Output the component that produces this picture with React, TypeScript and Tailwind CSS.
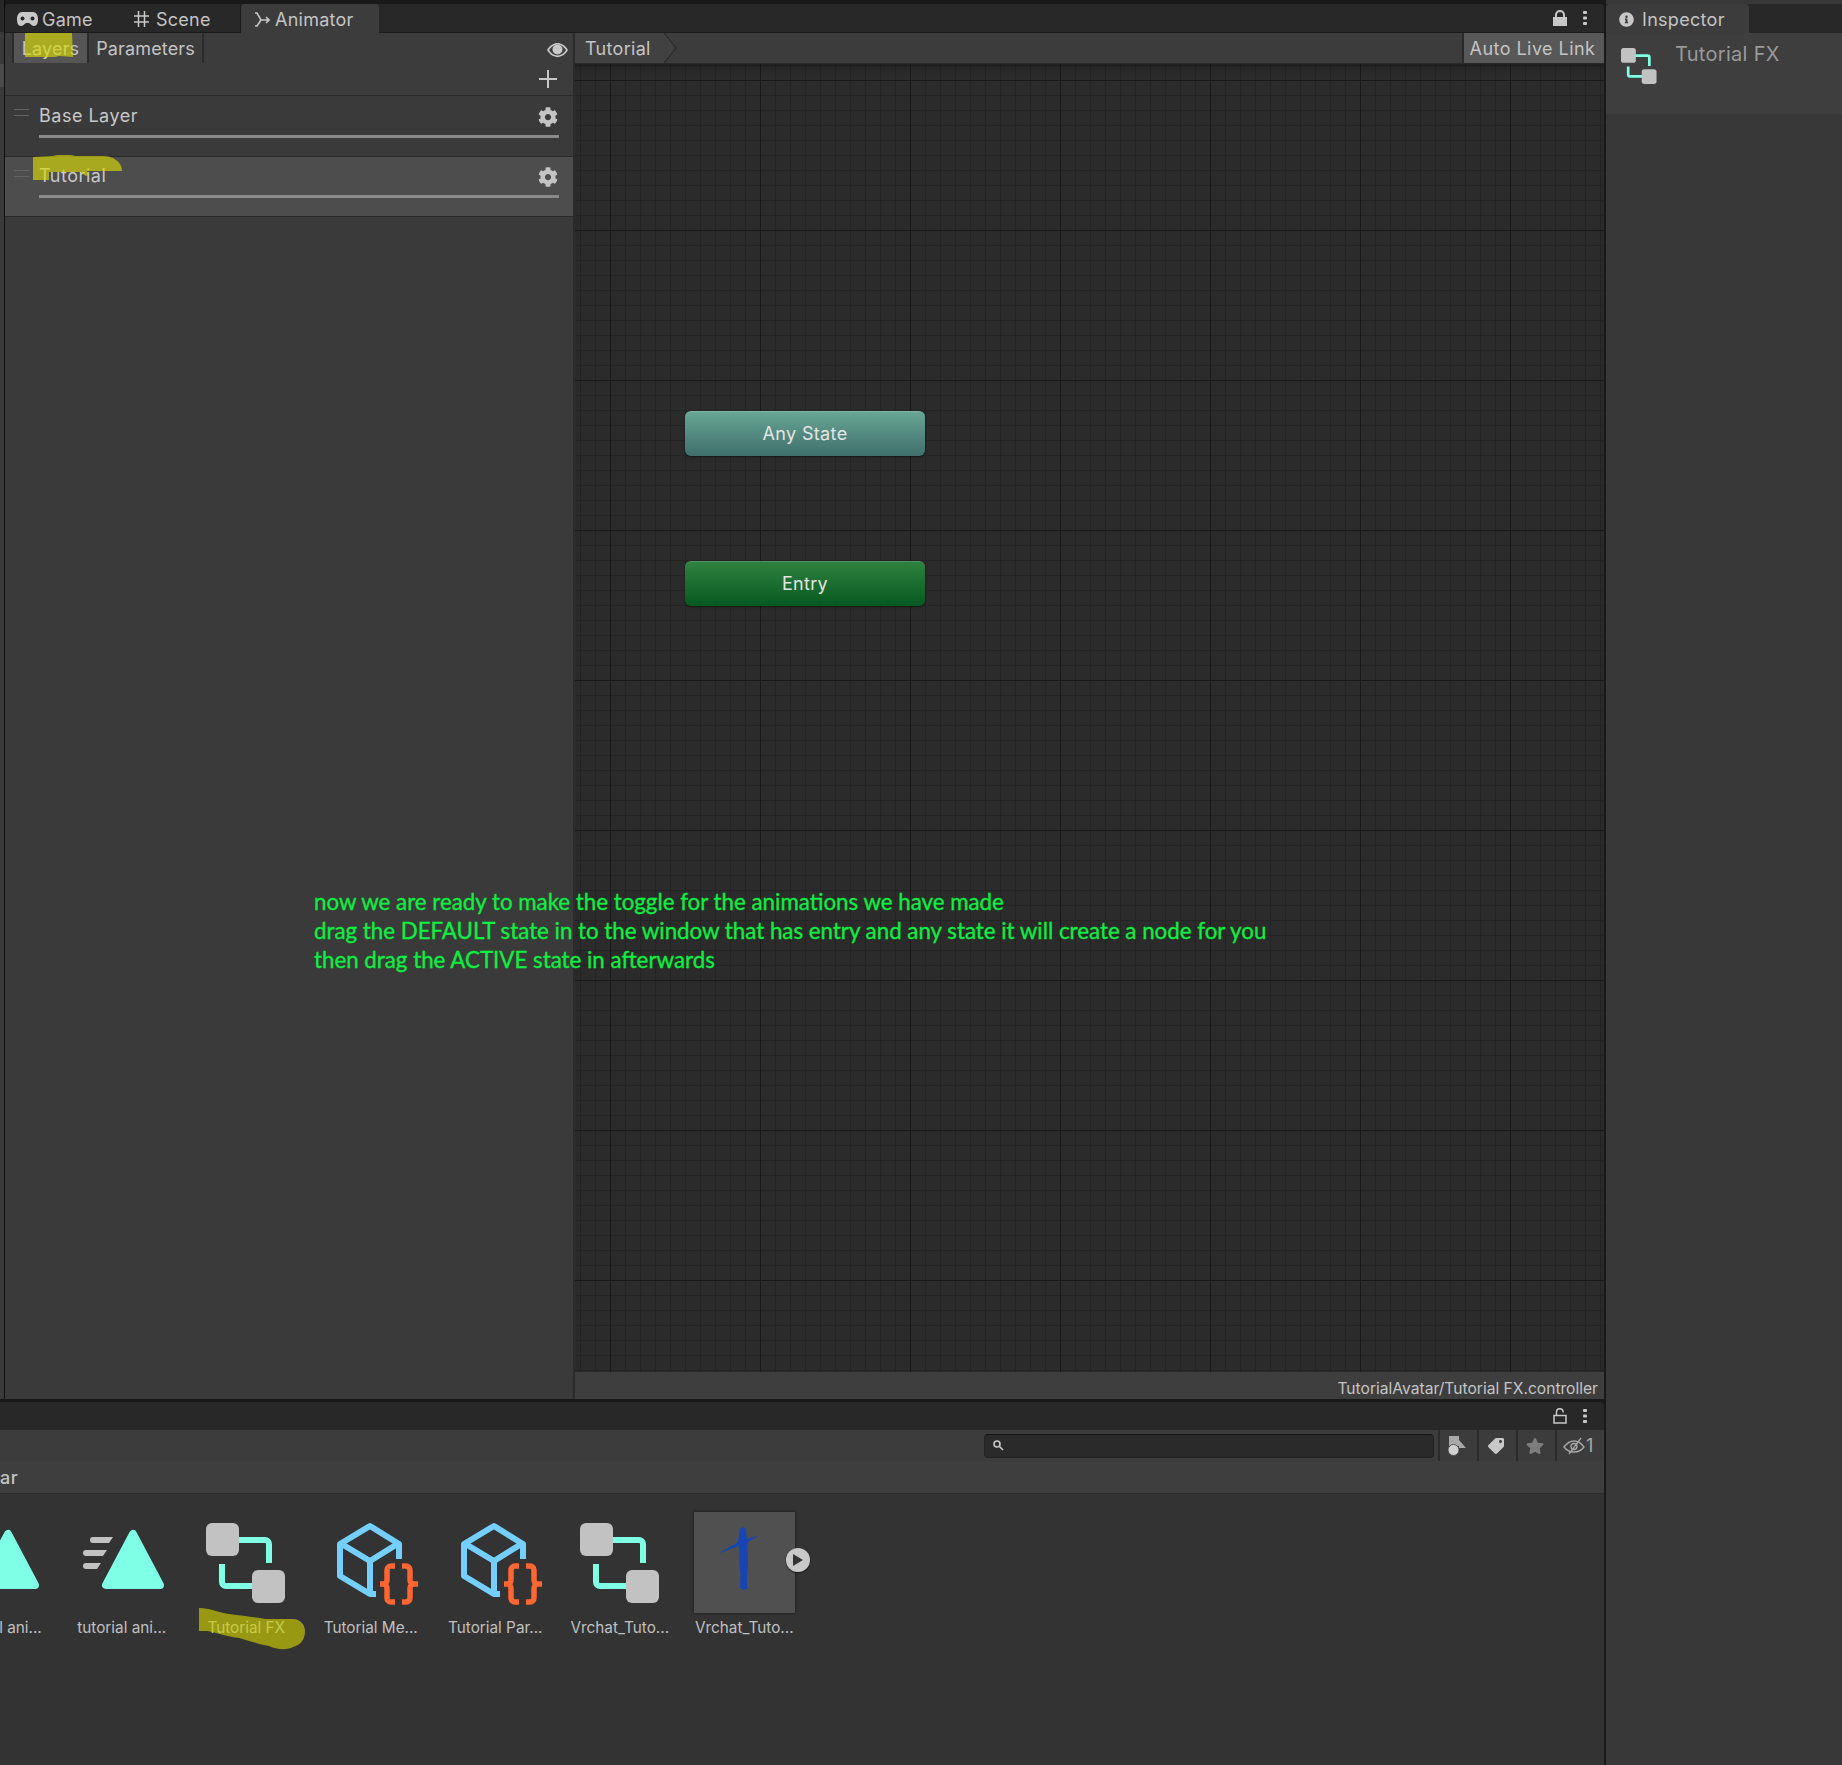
import { FaCog, FaInfoCircle, FaStar, FaTag } from "react-icons/fa";

const assets = [
  { name: "tutorial ani...", icon: "anim" },
  { name: "tutorial ani...", icon: "motion" },
  { name: "Tutorial FX", icon: "controller", marked: true },
  { name: "Tutorial Me...", icon: "params" },
  { name: "Tutorial Par...", icon: "params" },
  { name: "Vrchat_Tuto...", icon: "controller" },
  { name: "Vrchat_Tuto...", icon: "model" },
];

const ControllerIcon = ({ size = 80 }: { size?: number }) => (
  <svg width={size} height={size} viewBox="0 0 80 80" fill="none">
    <path d="M30 17h29a4 4 0 0 1 4 4v19" stroke="#7fffe6" strokeWidth="6" />
    <path d="M16 41v18a4 4 0 0 0 4 4h30" stroke="#7fffe6" strokeWidth="6" />
    <rect x="0" y="0" width="33" height="33" rx="6" fill="#c2c2c2" />
    <rect x="46" y="47" width="33" height="33" rx="6" fill="#c2c2c2" />
  </svg>
);

const TriangleIcon = ({ lines }: { lines: boolean }) => (
  <svg width="84" height="62" viewBox="0 0 84 62" fill="none">
    {lines && (
      <g fill="#c2c2c2">
        <path d="M9 15a3 3 0 0 1 3-3h20l-4 6H12a3 3 0 0 1-3-3Z" transform="translate(0 -3)" />
        <path d="M2 28a3 3 0 0 1 3-3h21l-4 6H5a3 3 0 0 1-3-3Z" transform="translate(0 -3)" />
        <path d="M2 41a3 3 0 0 1 3-3h15l-4 6H5a3 3 0 0 1-3-3Z" transform="translate(0 -3)" />
      </g>
    )}
    <path
      d="M52 6 L25 57 H79 Z"
      fill="#7fffe6"
      stroke="#7fffe6"
      strokeWidth="8"
      strokeLinejoin="round"
    />
  </svg>
);

const ParamsIcon = () => (
  <svg width="84" height="84" viewBox="0 0 84 84" fill="none">
    <path
      d="M62 37V22L33 4 3 22v32l30 18h6"
      stroke="#74cfff"
      strokeWidth="6"
      strokeLinejoin="round"
    />
    <path d="M3 21l30 18 29-18M33 39v33" stroke="#74cfff" strokeWidth="6" strokeLinejoin="round" />
    <path
      d="M58 44h-4a4 4 0 0 0-4 4v10a4 4 0 0 1-4 4h-3h3a4 4 0 0 1 4 4v10a4 4 0 0 0 4 4h4"
      stroke="#ff6633"
      strokeWidth="5.5"
    />
    <path
      d="M65 44h4a4 4 0 0 1 4 4v10a4 4 0 0 0 4 4h4h-4a4 4 0 0 0-4 4v10a4 4 0 0 1-4 4h-4"
      stroke="#ff6633"
      strokeWidth="5.5"
    />
  </svg>
);

const ModelThumb = () => (
  <div className="relative w-[101px] h-[101px] bg-[#505050] shadow-[0_0_3px_rgba(0,0,0,0.6)]">
    <svg width="101" height="101" viewBox="0 0 101 101">
      <path
        d="M46 17l3-2 3 2 .5 7 1 3 9-3 1.500 0-10 6-.5 6 .5 16-1 12 0 11 2 1-6 2-3-2 .5-12-1-14-.5-14-.5-2-17 6.500-2 0 13-7 5-3 1-4Z"
        fill="#1845b4"
      />
    </svg>
    <div className="absolute left-[92px] top-[36px] w-[24px] h-[24px] rounded-full bg-[#c9c9c9] flex items-center justify-center shadow-[0_1px_2px_rgba(0,0,0,0.5)]">
      <svg width="10" height="12" viewBox="0 0 10 12">
        <path d="M0 0l10 6-10 6Z" fill="#333" />
      </svg>
    </div>
  </div>
);

const AssetCell = ({ name, icon, marked }: { name: string; icon: string; marked?: boolean }) => (
  <div className="w-[124.5px] shrink-0 flex flex-col items-center relative">
    <div className="h-[101px] flex items-center justify-center">
      {icon === "anim" && <div className="mt-[-7px] ml-[2px]"><TriangleIcon lines={false} /></div>}
      {icon === "motion" && <div className="mt-[-7px] ml-[2px]"><TriangleIcon lines /></div>}
      {icon === "controller" && <ControllerIcon />}
      {icon === "params" && <div className="mt-[3px] ml-[16px]"><ParamsIcon /></div>}
      {icon === "model" && <ModelThumb />}
    </div>
    <div className="relative mt-[4px] text-[15.3px] leading-[22px] text-[#c0c0c0] whitespace-nowrap">{name}</div>
    {marked && (
      <svg className="absolute left-[14px] top-[96px]" width="112" height="44" viewBox="0 0 112 44">
        <path
          d="M1 0c10 0 18 4 30 6 14 2 26 3 36 5h28c7 0 12 6 12 12 0 8-4 14-12 16-5 3-16 3-24-1-10-2-20-5-30-8-14-2-24-6-32-7H1Z"
          fill="#d0d003"
          fillOpacity="0.65"
        />
      </svg>
    )}
  </div>
);

const LockOpen = () => (
  <svg width="14" height="16" viewBox="0 0 14 16" fill="none" stroke="#c8c8c8" strokeWidth="1.5">
    <rect x="1" y="7.5" width="12" height="7.5" />
    <path d="M3.5 7V4a3.3 3.3 0 0 1 6.6 0v.5" />
  </svg>
);

const Dots = () => (
  <svg width="4" height="14" viewBox="0 0 4 14" fill="#c8c8c8">
    <rect y="0" width="4" height="3" rx="1" />
    <rect y="5.5" width="4" height="3" rx="1" />
    <rect y="11" width="4" height="3" rx="1" />
  </svg>
);

const LayerRow = ({ name, active }: { name: string; active?: boolean }) => (
  <div className={`relative border-b border-[#2a2a2a] pl-[34px] pr-[14px] ${active ? "h-[60px] pt-[6px] bg-[#4d4d4d]" : "h-[61px] pt-[7px]"}`}>
    <div className="absolute left-[9px] top-[13px] w-[15px] h-[7px] border-y border-[#636363]" />
    <div className="flex items-center justify-between h-[24px]">
      <span className="text-[18px] tracking-[0.5px] text-[#c8c8c8]">{name}</span>
      <FaCog className={`text-[#c4c4c4] text-[20px] mr-[1px] ${active ? "mt-[4px]" : "mt-[3px]"}`} />
    </div>
    <div className="mt-[8px] h-[3px] bg-[#8a8a8a]" />
  </div>
);

export default function App() {
  return (
    <div
      className="relative w-[1842px] h-[1765px] flex overflow-hidden bg-[#191919] text-[#c4c4c4]"
      style={{ fontFamily: "Inter, 'Noto Sans', sans-serif" }}
    >
      {/* left side: animator + project */}
      <div className="w-[1604px] shrink-0 flex flex-col">
        <div className="h-[1399px] flex">
          <div className="w-[4px] shrink-0 flex flex-col">
            <div className="h-[32px] bg-[#282828]" />
            <div className="h-[32px] bg-[#3a3a3a]" />
            <div className="h-[23px] bg-[#4a4a4a]" />
            <div className="flex-1 bg-[#3a3a3a]" />
          </div>
          <div className="w-[1px] shrink-0 bg-[#0e0e0e]" />
          <div className="flex-1 flex flex-col pt-[4px]">
            {/* window tabs */}
            <div className="h-[29px] shrink-0 flex bg-[#282828] rounded-tr-[4px] rounded-tl-[3px] border-b border-[#1c1c1c] text-[18px] tracking-[0.25px]">
              <div className="w-[107px] flex items-center pl-[12px] pt-[2px] gap-[4px]">
                <svg width="21" height="14" viewBox="0 0 21 14">
                  <path d="M5 0h11c3 0 5 3 5 7s-1 7-4 7c-2 0-3-2-5-3H9c-2 1-3 3-5 3-3 0-4-3-4-7s2-7 5-7Z" fill="#c8c8c8" />
                  <circle cx="5.5" cy="6.5" r="2" fill="#282828" />
                  <circle cx="15.5" cy="6.5" r="2" fill="#282828" />
                </svg>
                <span>Game</span>
              </div>
              <div className="w-[129px] flex items-center pl-[22px] pt-[2px] gap-[7px] border-r border-[#1c1c1c]">
                <svg width="15" height="16" viewBox="0 0 15 16" stroke="#c8c8c8" strokeWidth="1.5">
                  <path d="M4.5 0v16M10.5 0v16M0 5h15M0 11h15" />
                </svg>
                <span>Scene</span>
              </div>
              <div className="w-[138px] mb-[-1px] flex items-center pl-[13px] pt-[2px] gap-[5px] bg-[#3c3c3c] rounded-t-[4px]">
                <svg width="16" height="16" viewBox="0 0 16 16" fill="none" stroke="#c8c8c8" strokeWidth="1.6">
                  <path d="M1 1h2l4 7h8M12 5l3 3-3 3M7 8l-4 6H1" />
                </svg>
                <span>Animator</span>
              </div>
              <div className="flex-1 flex items-center justify-end gap-[16px] pr-[17px]">
                <svg width="14" height="16" viewBox="0 0 14 16" fill="#c8c8c8">
                  <path d="M2 7V5a5 5 0 0 1 10 0v2h2v9H0V7h2Zm2 0h6V5a3 3 0 0 0-6 0v2Z" />
                </svg>
                <Dots />
              </div>
            </div>

            <div className="flex-1 flex min-h-0">
              {/* layers panel */}
              <div className="w-[568px] shrink-0 bg-[#3a3a3a] border-r-2 border-[#2b2b2b] box-content flex flex-col">
                <div className="h-[63px] shrink-0 border-b border-[#2a2a2a] bg-[#3c3c3c] relative text-[18px] tracking-[0.15px]">
                  <div className="flex h-[30px] pl-[7px]">
                    <div className="w-[77px] bg-[#555555] border-x-2 border-[#2b2b2b] flex items-center justify-center">Layers</div>
                    <div className="w-[115px] border-r-2 border-[#2b2b2b] flex items-center justify-center">Parameters</div>
                  </div>
                  <svg className="absolute left-[542px] top-[10px]" width="21" height="14" viewBox="0 0 21 14">
                    <path d="M0 7c3-5 7-7 10.500-7s7.500 2 10.500 7c-3 5-7 7-10.500 7S3 12 0 7Z" fill="#c8c8c8" />
                    <path d="M2 7c2-3 5-5.500 8.500-5.500S17 4 19 7c-2 3-5 5.500-8.500 5.500S4 10 2 7Z" fill="#3c3c3c" />
                    <circle cx="10.500" cy="6.500" r="5" fill="#c8c8c8" />
                  </svg>
                  <svg className="absolute left-[534px] top-[37px]" width="18" height="18" viewBox="0 0 18 18" fill="#c8c8c8">
                    <path d="M8 0h2v8h8v2h-8v8H8v-8H0V8h8Z" />
                  </svg>
                  {/* highlighter over the Layers tab */}
                  <svg className="absolute left-[20px] top-0" width="48" height="25" viewBox="0 0 48 25">
                    <path d="M0 0h47l1 24-14-1-4 1H0Z" fill="#d8da06" fillOpacity="0.65" />
                  </svg>
                </div>
                <LayerRow name="Base Layer" />
                <div className="relative">
                  <LayerRow name="Tutorial" active />
                  <svg className="absolute left-[28px] top-[-2px]" width="89" height="26" viewBox="0 0 89 26">
                    <path d="M0 2l20-1c6-2 16-2 22 0h28c10 0 19 6 19 15H54l2 4-3 1-6-4H16v8H0Z" fill="#d8da06" fillOpacity="0.65" />
                  </svg>
                </div>
              </div>

              {/* graph column */}
              <div className="flex-1 flex flex-col min-w-0">
                <div className="h-[31px] shrink-0 flex bg-[#3c3c3c] border-b border-[#2a2a2a]">
                  <div className="relative w-[91px] flex items-center pl-[10px] text-[18px] tracking-[0.3px] bg-[#414141]">
                    Tutorial
                    <svg className="absolute right-[-12px] top-0" width="14" height="30" viewBox="0 0 14 30">
                      <path d="M0 0l12 15L0 30Z" fill="#414141" />
                      <path d="M0 0l12 15L0 30" fill="none" stroke="#2a2a2a" strokeWidth="1.2" />
                    </svg>
                  </div>
                  <div className="flex-1" />
                  <div className="w-[142px] bg-[#585858] border-l-2 border-[#2b2b2b] flex items-center justify-center pr-[3px] pt-[1px] text-[18px] tracking-[0.45px]">
                    Auto Live Link
                  </div>
                </div>
                <div className="relative flex-1 bg-[#2b2b2b] bg-[linear-gradient(to_right,#191919_1px,transparent_1px),linear-gradient(to_bottom,#191919_1px,transparent_1px),linear-gradient(to_right,#242424_1px,transparent_1px),linear-gradient(to_bottom,#242424_1px,transparent_1px)] bg-[size:150px_150px,150px_150px,15px_15px,15px_15px] bg-[position:35px_16px,35px_16px,5px_1px,5px_1px] shadow-[inset_0_8px_8px_-6px_rgba(0,0,0,0.35)]">
                  <div className="absolute left-[110px] top-[347px] w-[240px] h-[45px] rounded-[6px] border-t border-[#7fb5a5] bg-gradient-to-b from-[#68a694] to-[#3f6f6b] flex items-center justify-center pb-[2px] text-[18px] tracking-[0.35px] text-[#e4e4e4] shadow-[0_1px_2px_rgba(0,0,0,0.5)]">
                    Any State
                  </div>
                  <div className="absolute left-[110px] top-[497px] w-[240px] h-[45px] rounded-[6px] border-t border-[#4f9160] bg-gradient-to-b from-[#2e8240] to-[#05591f] flex items-center justify-center pb-[2px] text-[18px] tracking-[0.3px] text-[#e4e4e4] shadow-[0_1px_2px_rgba(0,0,0,0.5)]">
                    Entry
                  </div>
                </div>
                <div className="h-[27px] shrink-0 bg-[#3e3e3e] flex items-center justify-end pr-[6px] pt-[7px] text-[15.6px]">
                  TutorialAvatar/Tutorial FX.controller
                </div>
              </div>
            </div>
          </div>
        </div>

        {/* project window */}
        <div className="mt-[3px] flex-1 flex flex-col min-h-0">
          <div className="h-[28px] shrink-0 bg-[#282828] rounded-tr-[4px] flex items-center justify-end gap-[16px] pr-[17px]">
            <LockOpen />
            <Dots />
          </div>
          <div className="h-[31px] shrink-0 bg-[#3c3c3c] flex items-center justify-end">
            <div className="w-[450px] h-[24px] rounded-[4px] bg-[#2a2a2a] border border-[#222222] border-t-[#151515] flex items-center pl-[8px] mr-[4px]">
              <svg width="11" height="11" viewBox="0 0 11 11" fill="none" stroke="#c8c8c8" strokeWidth="1.6">
                <circle cx="4" cy="4" r="3" />
                <path d="M6.500 6.500l3.500 3.500" />
              </svg>
            </div>
            <div className="w-[39px] h-full border-l-2 border-[#2b2b2b] flex items-center pl-[8px]">
              <svg width="18" height="20" viewBox="0 0 18 20">
                <rect x="1" y="0" width="10" height="10" fill="#a8a8a8" />
                <path d="M11 4l7 8h-7Z" fill="#a8a8a8" />
                <circle cx="5.500" cy="14" r="5.500" fill="#d0d0d0" stroke="#3c3c3c" strokeWidth="0.8" />
              </svg>
            </div>
            <div className="w-[39px] h-full border-l-2 border-[#2b2b2b] flex items-center pl-[9px]">
              <FaTag className="text-[#c8c8c8] text-[16px] rotate-90" />
            </div>
            <div className="w-[39px] h-full border-l-2 border-[#2b2b2b] flex items-center pl-[8px]">
              <FaStar className="text-[#7d7d7d] text-[18px]" />
            </div>
            <div className="w-[49px] h-full border-l-2 border-[#2b2b2b] flex items-center pl-[6px] gap-[1px] text-[18px]">
              <svg width="22" height="18" viewBox="0 0 22 18" fill="none" stroke="#a8a8a8" strokeWidth="1.3">
                <path d="M1 10c3-4 6-6 10-6s7 2 10 6c-3 4-6 5-10 5s-7-1-10-5Z" />
                <path d="M6 17L18 1" />
                <circle cx="11" cy="9.500" r="3" />
              </svg>
              <span className="text-[#a8a8a8]">1</span>
            </div>
          </div>
          <div className="h-[33px] shrink-0 bg-[#3e3e3e] border-b border-[#2b2b2b] flex items-center text-[18px] font-medium tracking-[0.5px]">
            ar
          </div>
          <div className="relative flex-1 bg-[#333333] flex items-start pt-[18px] overflow-hidden">
            <div className="flex ml-[-65px]">
              {assets.map((a, i) => (
                <AssetCell key={`${a.name}-${i}`} name={a.name} icon={a.icon} marked={a.marked} />
              ))}
            </div>
          </div>
        </div>
      </div>

      <div className="w-[2px] shrink-0" />

      {/* inspector */}
      <div className="flex-1 flex flex-col bg-[#383838]">
        <div className="mt-[4px] h-[29px] shrink-0 bg-[#282828] flex">
          <div className="w-[143px] bg-[#3c3c3c] rounded-t-[4px] flex items-center pl-[13px] pt-[2px] gap-[8px] text-[18px] tracking-[0.3px]">
            <FaInfoCircle className="text-[#c8c8c8] text-[15px]" />
            <span>Inspector</span>
          </div>
        </div>
        <div className="h-[81px] shrink-0 bg-[#3e3e3e] relative">
          <div className="absolute left-[15px] top-[15px]">
            <ControllerIcon size={36} />
          </div>
          <div className="absolute left-[69px] top-[6px] text-[20px] tracking-[0.3px] text-[#9a9a9a]">Tutorial FX</div>
        </div>
      </div>

      {/* annotation over the screenshot */}
      <div
        className="absolute left-[314px] top-[887px] text-[22.3px] leading-[29px] text-[#0cf041] whitespace-nowrap [-webkit-text-stroke:0.3px_#0cf041]"
        style={{ fontFamily: "Lato, sans-serif" }}
      >
        <div>now we are ready to make the toggle for the animations we have made</div>
        <div>drag the DEFAULT state in to the window that has entry and any state it will create a node for you</div>
        <div>then drag the ACTIVE state in afterwards</div>
      </div>
    </div>
  );
}
